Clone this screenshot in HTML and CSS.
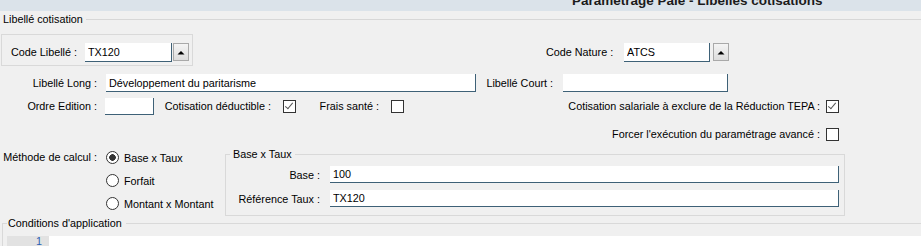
FILE: index.html
```html
<!DOCTYPE html>
<html lang="fr">
<head>
    <meta charset="UTF-8">
    <meta name="viewport" content="width=device-width, initial-scale=1.0">
    <link rel="stylesheet" href="styles.css">
</head>
<body>

<div class="titlebar">
    <div class="title">Paramétrage Paie - Libellés cotisations</div>
</div>

<div class="section-head">
    <span>Libellé cotisation</span>
    <div class="rule"></div>
</div>

<!-- codes -->
<div class="row row-codes">
    <div class="code-box">
        <span class="lbl lbl-code">Code Libellé :</span>
        <input class="field field-code" type="text" value="TX120" readonly>
        <button class="spin" type="button">
            <svg width="8" height="5" viewBox="0 0 8 5"><path d="M0.5 4.5 L4 1 L7.5 4.5 Z" fill="#000"/></svg>
        </button>
    </div>
    <div class="nature">
        <span class="lbl lbl-nature">Code Nature :</span>
        <input class="field field-nature" type="text" value="ATCS" readonly>
        <button class="spin spin-nature" type="button">
            <svg width="8" height="5" viewBox="0 0 8 5"><path d="M0.5 4.5 L4 1 L7.5 4.5 Z" fill="#000"/></svg>
        </button>
    </div>
</div>

<div class="row row-long">
    <span class="lbl lbl-left">Libellé Long :</span>
    <input class="field field-long" type="text" value="Développement du paritarisme" readonly>
    <span class="lbl lbl-court">Libellé Court :</span>
    <input class="field field-court" type="text" value="" readonly>
</div>

<div class="row row-opts">
    <span class="lbl lbl-left">Ordre Edition :</span>
    <input class="field field-ordre" type="text" value="" readonly>
    <span class="lbl lbl-deduct">Cotisation déductible :</span>
    <span class="check on"></span>
    <span class="lbl lbl-frais">Frais santé :</span>
    <span class="check"></span>
    <span class="lbl lbl-tepa">Cotisation salariale à exclure de la Réduction TEPA :</span>
    <span class="check check-near on"></span>
</div>

<div class="row row-force">
    <span class="lbl lbl-force">Forcer l'exécution du paramétrage avancé :</span>
    <span class="check check-near"></span>
</div>

<!-- methode de calcul -->
<div class="calc">
    <span class="lbl lbl-calc">Méthode de calcul :</span>
    <div class="radios">
        <div class="radio-row"><span class="radio on"></span>Base x Taux</div>
        <div class="radio-row"><span class="radio"></span>Forfait</div>
        <div class="radio-row"><span class="radio"></span>Montant x Montant</div>
    </div>
    <fieldset class="taux">
        <legend>Base x Taux</legend>
        <div class="trow">
            <span class="lbl lbl-taux">Base :</span>
            <input class="field field-taux" type="text" value="100" readonly>
        </div>
        <div class="trow">
            <span class="lbl lbl-taux">Référence Taux :</span>
            <input class="field field-taux" type="text" value="TX120" readonly>
        </div>
    </fieldset>
</div>

<fieldset class="cond">
    <legend>Conditions d'application</legend>
    <div class="editor">
        <div class="gutter">1</div>
        <div class="code"></div>
    </div>
</fieldset>

</body>
</html>
```

FILE: styles.css
```css
html, body {
    margin: 0;
    overflow: hidden;
}

body {
    width: 921px;
    height: 246px;
    background-color: #f0f0f0;
    font-family: "Liberation Sans", Arial, sans-serif;
    font-size: 10.8px;
    color: #000;
}

.titlebar {
    height: 11px;
    overflow: hidden;
    background-color: #dbe3ea;
}

.title {
    margin-top: -6px;
    padding-left: 572px;
    font-size: 13.5px;
    line-height: 13px;
    font-weight: bold;
    color: #1b1b1b;
    white-space: nowrap;
}

.section-head {
    display: flex;
    align-items: center;
    height: 16px;
    padding-left: 3px;
}

.section-head .rule {
    flex: 1;
    height: 1px;
    margin-left: 3px;
    background-color: #d7d7d7;
}

.row {
    display: flex;
    align-items: center;
}

.lbl {
    white-space: nowrap;
    flex-shrink: 0;
}

.field {
    box-sizing: border-box;
    height: 18px;
    padding: 0 3px;
    border: none;
    border-right: 1px solid #3e6177;
    border-bottom: 1px solid #3e6177;
    background-color: #fff;
    font: inherit;
    color: #000;
    outline: none;
    flex-shrink: 0;
}

.spin {
    box-sizing: border-box;
    width: 16px;
    height: 18px;
    padding: 0;
    display: flex;
    align-items: center;
    justify-content: center;
    border: 1px solid #a9a9a9;
    background: linear-gradient(#f4f4f4, #dcdcdc);
    flex-shrink: 0;
}

/* codes */
.row-codes {
    margin-top: 7px;
}

.code-box {
    display: flex;
    align-items: center;
    box-sizing: border-box;
    width: 192px;
    height: 32px;
    margin-left: 1px;
    padding: 4px 0 0 9px;
    border: 1px solid #d9d9d9;
}

.lbl-code {
    width: 74px;
}

.field-code {
    width: 87px;
    height: 19px;
}

.code-box .spin {
    margin-left: 1px;
}

.nature {
    display: flex;
    align-items: center;
    height: 32px;
    padding-top: 4px;
    box-sizing: border-box;
    margin-left: 353px;
}

.lbl-nature {
    width: 78px;
}

.field-nature {
    width: 86px;
    height: 19px;
}

.spin-nature {
    margin-left: 3px;
}

/* libelles */
.row-long {
    margin-top: 8px;
    height: 18px;
}

.lbl-left {
    width: 97px;
    text-align: right;
}

.field-long {
    width: 370px;
    margin-left: 9px;
}

.lbl-court {
    box-sizing: border-box;
    width: 81px;
    padding-right: 4px;
    text-align: right;
}

.field-court {
    width: 165px;
    margin-left: 6px;
}

/* options */
.row-opts {
    margin-top: 5px;
    height: 18px;
}

.field-ordre {
    width: 49px;
    height: 17px;
    margin-left: 8px;
}

.lbl-deduct {
    width: 117px;
    text-align: right;
}

.lbl-frais {
    width: 83px;
    text-align: right;
}

.lbl-tepa {
    width: 416px;
    text-align: right;
}

.row-force {
    margin-top: 10px;
    height: 18px;
}

.lbl-force {
    width: 820px;
    text-align: right;
}

.check {
    box-sizing: border-box;
    width: 13px;
    height: 13px;
    margin-left: 12px;
    border: 1px solid #333;
    background-color: #fff;
    flex-shrink: 0;
    position: relative;
}

.check-near {
    margin-left: 6px;
}

.check.on::after {
    content: "";
    position: absolute;
    left: 3px;
    top: 0px;
    width: 3px;
    height: 7px;
    border-right: 1px solid #555;
    border-bottom: 1px solid #555;
    transform: rotate(40deg);
    transform-origin: 50% 50%;
}

/* methode de calcul */
.calc {
    display: flex;
    align-items: flex-start;
    margin-top: 3px;
}

.lbl-calc {
    width: 97px;
    height: 23px;
    line-height: 23px;
    text-align: right;
}

.radios {
    width: 119px;
    margin-left: 9px;
}

.radio-row {
    display: flex;
    align-items: center;
    height: 23px;
    white-space: nowrap;
}

.radio {
    box-sizing: border-box;
    width: 13px;
    height: 13px;
    margin-right: 5px;
    border: 1px solid #333;
    border-radius: 50%;
    background-color: #fff;
}

.radio.on {
    background: radial-gradient(circle, #333 0, #333 3px, #fff 3.6px);
}

.taux {
    box-sizing: border-box;
    width: 620px;
    min-width: 0;
    margin: 2px 0 0 0;
    padding: 6px 5px 8px 0;
    border: 1px solid #d9d9d9;
}

.taux legend {
    margin-left: 4px;
    padding: 0 3px;
    line-height: 12px;
}

.trow {
    display: flex;
    align-items: center;
    height: 17px;
}

.trow + .trow {
    margin-top: 7px;
}

.lbl-taux {
    width: 94px;
    text-align: right;
}

.field-taux {
    width: 509px;
    height: 17px;
    margin-left: 10px;
}

/* conditions */
.cond {
    min-width: 0;
    margin: 1px -10px 0 2px;
    padding: 6px 0 0 4px;
    border: 1px solid #d9d9d9;
    border-bottom: none;
}

.cond legend {
    margin-left: 0;
    padding: 0 4px 0 1px;
    line-height: 13px;
}

.editor {
    display: flex;
    height: 10px;
    overflow: hidden;
    background-color: #fff;
}

.gutter {
    box-sizing: border-box;
    width: 42px;
    padding-right: 7px;
    text-align: right;
    line-height: 11px;
    background-color: #e2e2e2;
    color: #2b5fb3;
}

.code {
    flex: 1;
}
```
